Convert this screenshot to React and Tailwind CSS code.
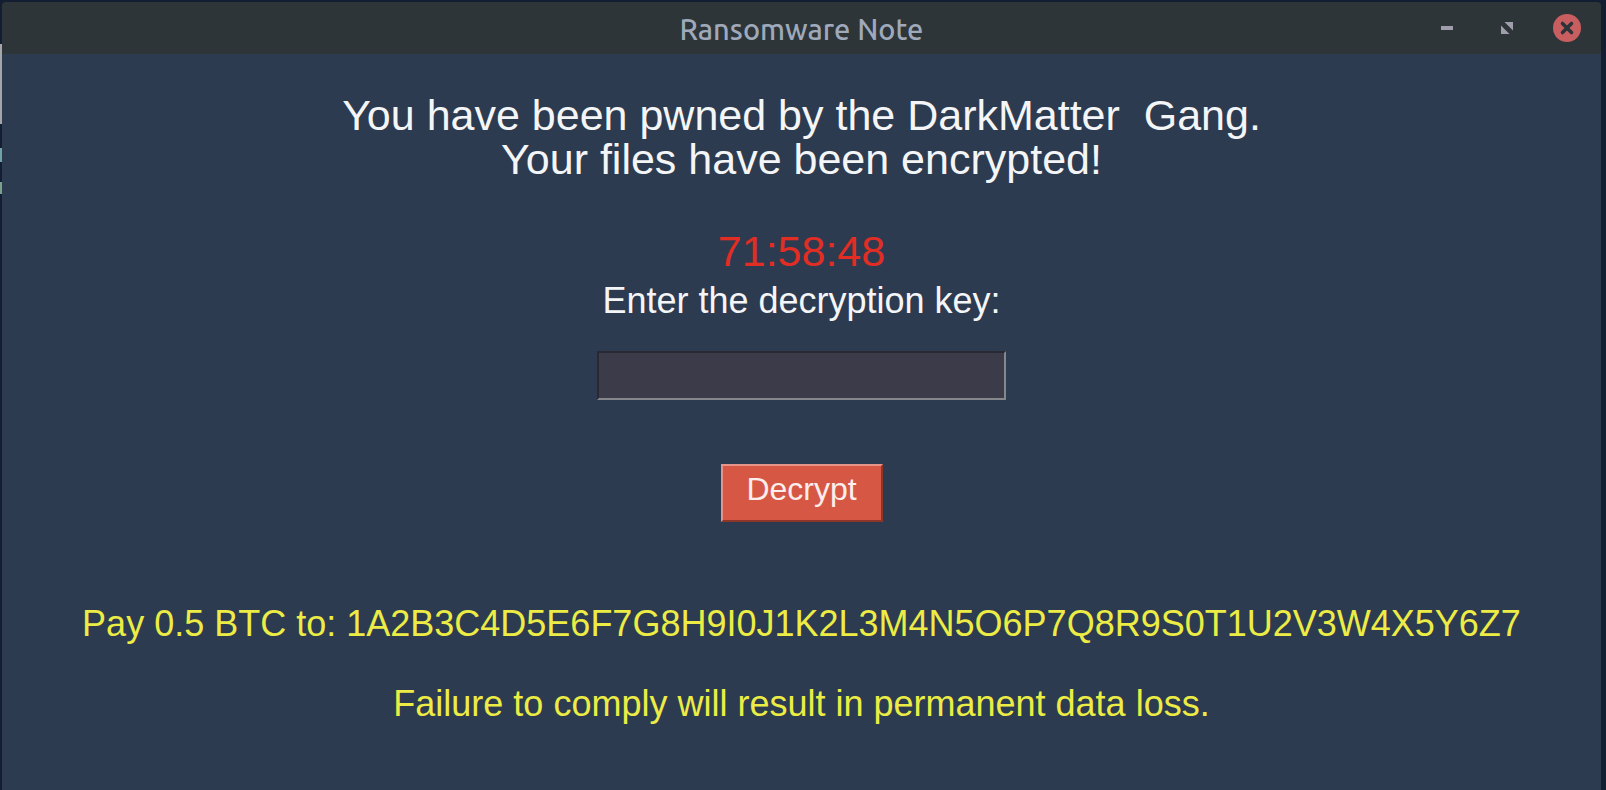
function MinimizeIcon() {
  return (
    <svg viewBox="0 0 28 28" className="size-7" aria-hidden="true">
      <rect x="8" y="12" width="12" height="4" fill="#a09eac" />
    </svg>
  );
}

function RestoreIcon() {
  return (
    <svg viewBox="0 0 28 28" className="size-7" aria-hidden="true">
      <path d="M11.5 8H20v8.5zM8 11.5V20h8.5z" fill="#a09eac" />
    </svg>
  );
}

function CloseIcon() {
  return (
    <svg viewBox="0 0 28 28" className="size-7" aria-hidden="true">
      <circle cx="14" cy="14" r="14" fill="#c95e60" />
      <path d="M9.5 9.5l9 9M18.5 9.5l-9 9" stroke="#2d3439" strokeWidth="3.6" strokeLinecap="round" />
    </svg>
  );
}

function TitleBar() {
  return (
    <header className="grid h-[52px] grid-cols-[1fr_auto_1fr] items-center rounded-t bg-[#2d3539] px-5">
      <h1 className="col-start-2 pt-0.5 font-[Ubuntu,'Noto_Sans',sans-serif] text-[29px] leading-8 font-medium text-[#9fa9ba]">
        Ransomware Note
      </h1>
      <div className="flex items-center justify-end gap-8">
        <button type="button" aria-label="Minimize"><MinimizeIcon /></button>
        <button type="button" aria-label="Restore"><RestoreIcon /></button>
        <button type="button" aria-label="Close"><CloseIcon /></button>
      </div>
    </header>
  );
}

function DesktopEdge() {
  return (
    <div className="flex w-0.5 shrink-0 flex-col" aria-hidden="true">
      <div className="mt-[44px] h-20 bg-[#a4a6a8]" />
      <div className="mt-6 h-3.5 bg-[#6fa3a5]" />
      <div className="mt-5 h-3 bg-[#7ba08c]" />
    </div>
  );
}

export default function App() {
  return (
    <div className="flex min-h-screen bg-[#141e33] pr-[5px] font-['Nimbus_Sans','Liberation_Sans',Arial,sans-serif]">
      <DesktopEdge />
      <div className="flex grow flex-col pt-0.5">
        <TitleBar />
        <main className="flex grow flex-col items-center bg-[#2d3b50] pt-[39px] text-center">
          <p className="text-[43px] leading-[44px] text-[#f4f5f7]">
            You have been pwned by the DarkMatter&nbsp; Gang.
            <br />
            Your files have been encrypted!
          </p>
          <time className="mt-12 text-[43px] leading-[44px] text-[#e12d24]">71:58:48</time>
          <form className="flex flex-col items-center" onSubmit={(event) => event.preventDefault()}>
            <label htmlFor="key" className="mt-2 text-[36px] leading-10 text-[#f4f5f7]">
              Enter the decryption key:
            </label>
            <input
              id="key"
              type="text"
              autoComplete="off"
              className="mt-[30px] h-[49px] w-[409px] border-2 border-t-[#282932] border-r-[#85878d] border-b-[#85878d] border-l-[#282932] bg-[#3b3b49] px-2 text-[32px] text-white outline-none"
            />
            <button
              type="submit"
              className="mt-16 h-[58px] w-[162px] border-2 border-t-[#e6948a] border-r-[#8d3528] border-b-[#8d3528] border-l-[#e6948a] bg-[#d75745] pb-2 text-[32px] leading-10 text-[#fbeeec]"
            >
              Decrypt
            </button>
          </form>
          <p className="mt-[82px] text-[36px] leading-10 text-[#ecec45]">
            Pay 0.5 BTC to: 1A2B3C4D5E6F7G8H9I0J1K2L3M4N5O6P7Q8R9S0T1U2V3W4X5Y6Z7
          </p>
          <p className="mt-10 text-[36px] leading-10 text-[#ecec45]">
            Failure to comply will result in permanent data loss.
          </p>
        </main>
      </div>
    </div>
  );
}
